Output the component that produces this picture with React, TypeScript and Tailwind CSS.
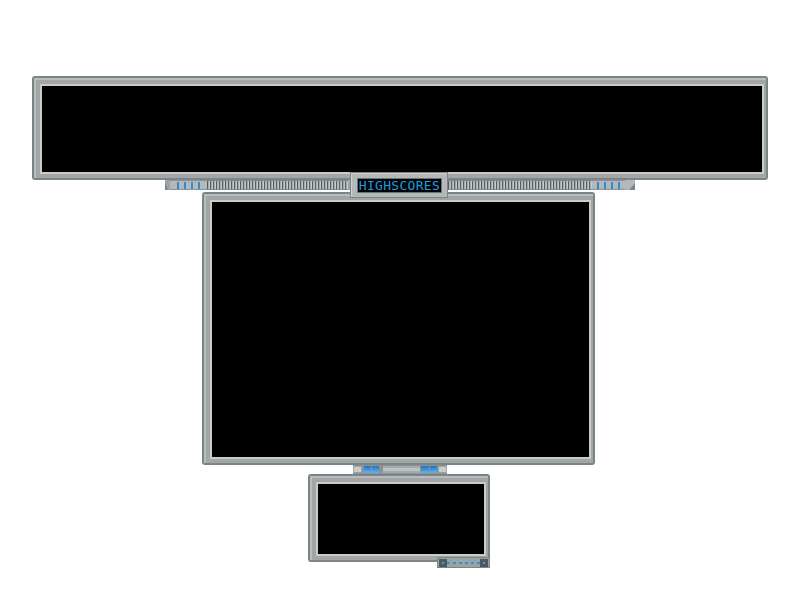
import React from 'react';

function Frame({ className = '' }: { className?: string }) {
  return (
    <div className={`bg-[#7b8589] p-[2px] rounded-[3px] ${className}`}>
      <div className="h-full bg-[#a2a6a6] border-t-2 border-l-2 border-[#b9bdbd] pt-[4px] pl-[4px] pr-[2px] pb-[4px]">
        <div className="h-full bg-[#c9cdc9] p-[2px]">
          <div className="h-full bg-black" />
        </div>
      </div>
    </div>
  );
}

function Ticks({ count }: { count: number }) {
  return (
    <div className="h-full bg-[#b4b8b8] border-y border-[#8a9295] flex items-center justify-center gap-[5px]">
      {Array.from({ length: count }).map((_, i) => (
        <div key={i} className="w-[2px] h-[7px] bg-[#2a8fd8]" />
      ))}
    </div>
  );
}

function Grill({ className = '' }: { className?: string }) {
  return (
    <div className={`h-full bg-[#7f878a] py-[1px] ${className}`}>
      <div className="h-full bg-[repeating-linear-gradient(90deg,#545e62_0px,#545e62_1px,#a8acac_1px,#a8acac_2px,#c4c8c8_2px,#c4c8c8_3px)]" />
    </div>
  );
}

export default function App() {
  return (
    <div className="w-[800px] min-h-[600px] bg-white pt-[76px]" style={{ fontFamily: '"DejaVu Sans Mono", monospace' }}>
      {/* top display */}
      <div className="ml-[32px] w-[736px] h-[104px]">
        <Frame className="h-full" />
      </div>

      {/* strip with title */}
      <div className="relative ml-[165px] w-[470px] h-[12px]">
        <div className="flex h-[10px] bg-[#7b8589]">
          <div className="w-[5px] h-full bg-[#9ea2a2] [clip-path:polygon(100%_0,100%_100%,60%_100%,0_30%,0_0)]" />
          <div className="w-[37px] h-full"><Ticks count={4} /></div>
          <div className="w-[141px] h-full"><Grill /></div>
          <div className="w-[100px] h-full bg-[#a2a6a6]" />
          <div className="w-[144px] h-full"><Grill /></div>
          <div className="w-[33px] h-full"><Ticks count={4} /></div>
          <div className="w-[10px] h-full bg-[#b4b8b8] [clip-path:polygon(0_0,100%_0,100%_30%,40%_100%,0_100%)]" />
        </div>
        <div className="absolute left-[185px] top-[-8px] w-[98px] h-[26px] bg-[#7b8589] p-[1px]">
          <div className="h-full bg-[#b4b8b8] border-t border-l border-[#d0d4d0] px-[5px] py-[4px]">
            <div className="h-full bg-black border border-[#6a7478] flex items-center justify-center">
              <span className="text-[13px] leading-none tracking-[0.3px] text-[#1a9ee2]">HIGHSCORES</span>
            </div>
          </div>
        </div>
      </div>

      {/* main list */}
      <div className="ml-[202px] w-[393px] h-[273px]">
        <Frame className="h-full" />
      </div>

      {/* connector */}
      <div className="ml-[353px] w-[94px] h-[9px] bg-[#8a9294] flex items-stretch py-[1px]">
        <div className="w-[9px] bg-[#c9cdc9] border border-[#9ea2a2]" />
        <div className="ml-[2px] w-[7px] bg-gradient-to-b from-[#1f6fc8] to-[#62b8f0]" />
        <div className="ml-[1px] w-[7px] bg-gradient-to-b from-[#1f6fc8] to-[#62b8f0]" />
        <div className="ml-[4px] flex-1 bg-[#bfc3c0] border-y-2 border-[#a6aaa8]" />
        <div className="ml-[1px] w-[8px] bg-gradient-to-b from-[#1f6fc8] to-[#62b8f0]" />
        <div className="ml-[1px] w-[7px] bg-gradient-to-b from-[#1f6fc8] to-[#62b8f0]" />
        <div className="ml-[1px] w-[9px] bg-[#c9cdc9] border border-[#9ea2a2]" />
      </div>

      {/* small panel */}
      <div className="ml-[308px] w-[182px] h-[88px]">
        <Frame className="h-full" />
      </div>

      {/* bottom tab */}
      <div className="relative ml-[437px] -mt-[5px] w-[53px] h-[11px] bg-[#9ea2a2] border border-[#7b8589] flex items-center px-[1px]">
        <div className="w-[8px] h-[8px] bg-[#4f5a5e] flex items-center justify-center">
          <div className="w-[2px] h-[2px] bg-[#3aa0f0]" />
        </div>
        <div className="flex-1 flex items-center justify-center gap-[3px]">
          {Array.from({ length: 6 }).map((_, i) => (
            <div key={i} className="w-[3px] h-[2px] bg-[#2a90e0]" />
          ))}
        </div>
        <div className="w-[8px] h-[8px] bg-[#4f5a5e] flex items-center justify-center">
          <div className="w-[2px] h-[2px] bg-[#3aa0f0]" />
        </div>
      </div>
    </div>
  );
}
